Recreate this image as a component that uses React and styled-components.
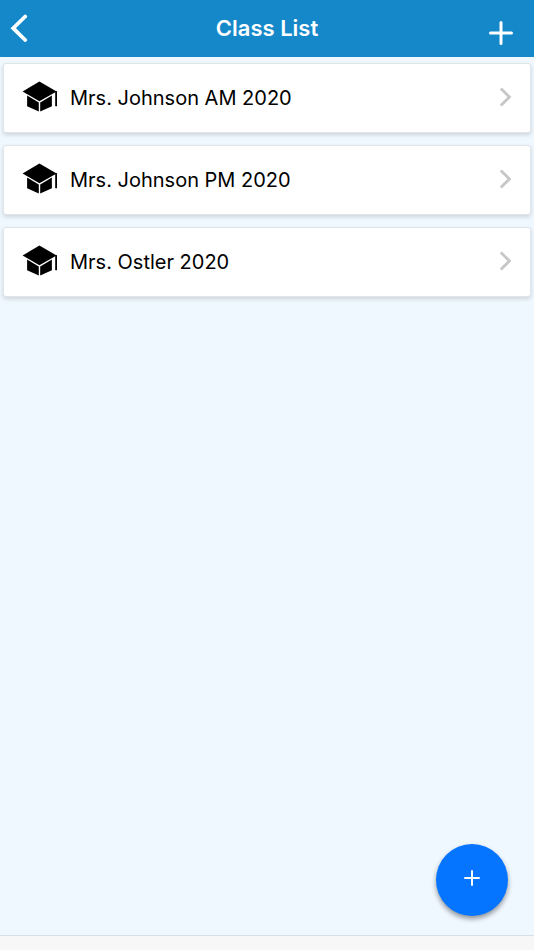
import React from 'react'
import styled, { createGlobalStyle } from 'styled-components'

const GlobalStyle = createGlobalStyle`
  * {
    box-sizing: border-box;
  }
  body {
    margin: 0;
    background: #eff7ff;
    font-family: Inter, "Liberation Sans", sans-serif;
    color: #000;
  }
  button {
    border: 0;
    padding: 0;
    background: none;
    font: inherit;
    cursor: pointer;
  }
  svg {
    display: block;
  }
`

const Page = styled.div`
  min-height: 100vh;
  display: flex;
  flex-direction: column;
`

const Header = styled.header`
  display: grid;
  grid-template-columns: 64px 1fr 64px;
  align-items: center;
  height: 57px;
  padding-bottom: 1px;
  background: #1588ca;
  color: #fff;
`

const Title = styled.h1`
  margin: 0;
  font-size: 22px;
  line-height: 28px;
  font-weight: 600;
  text-align: center;
`

const HeaderButton = styled.button`
  display: flex;
  align-items: center;
  height: 100%;
  color: #fff;
  justify-content: ${props => props.$end ? 'flex-end' : 'flex-start'};
  padding: ${props => props.$end ? '10px 21px 0 0' : '0 0 0 10px'};
`

const List = styled.ul`
  flex: 1;
  display: flex;
  flex-direction: column;
  gap: 12px;
  margin: 0;
  padding: 6px 3px;
  list-style: none;
`

const ClassRow = styled.a`
  display: flex;
  align-items: center;
  gap: 12px;
  height: 70px;
  padding: 0 18px 2px;
  background: #fff;
  border: 1px solid #e0e5ea;
  border-radius: 3px;
  box-shadow: 0 2px 4px rgba(0, 0, 0, 0.14);
  color: #000;
  text-decoration: none;
`

const ClassName = styled.span`
  flex: 1;
  padding-top: 1px;
  font-size: 20px;
  line-height: 28px;
`

const AddButton = styled.button`
  position: fixed;
  right: 26px;
  bottom: 34px;
  display: flex;
  align-items: center;
  justify-content: center;
  width: 72px;
  height: 72px;
  && {
    padding-bottom: 4px;
    background: #0574ff;
  }
  border-radius: 50%;
  color: #fff;
  box-shadow: 0 3px 5px rgba(0, 0, 0, 0.4);
`

const Footer = styled.footer`
  height: 15px;
  background: #f7f7f7;
  border-top: 1px solid #d8e0e6;
`

const BackIcon = () => (
  <svg width="18" height="28" viewBox="0 0 18 28" fill="none" stroke="currentColor" strokeWidth="3.8" strokeLinecap="round" aria-hidden="true">
    <path d="M15.2 2.5 3.2 14.2 15.2 26" />
  </svg>
)

const PlusIcon = ({ size, stroke }) => (
  <svg width={size} height={size} viewBox={`0 0 ${size} ${size}`} stroke="currentColor" strokeWidth={stroke} strokeLinecap="round" aria-hidden="true">
    <path d={`M${size / 2} ${stroke / 2}V${size - stroke / 2}M${stroke / 2} ${size / 2}H${size - stroke / 2}`} />
  </svg>
)

const SchoolIcon = () => (
  <svg width="36" height="34" viewBox="0 0 36 34" aria-hidden="true">
    <path d="M17.4 1.6 34.6 11.4 17.4 21.2.6 11.4Z" />
    <path d="M5.1 15.4 16.8 22.5V31.6L5.1 26.2Z" />
    <path d="M29.9 15.4 18.2 22.5V31.6L29.9 26.2Z" />
    <path d="M33.2 11.6 35 11V26.3H33.2Z" />
  </svg>
)

const ChevronIcon = () => (
  <svg width="13" height="22" viewBox="0 0 13 22" fill="none" stroke="#c7c7c7" strokeWidth="2.8" aria-hidden="true">
    <path d="M1.8 2.4 10.4 11 1.8 19.6" />
  </svg>
)

const classes = [
  { id: 1, name: 'Mrs. Johnson AM 2020' },
  { id: 2, name: 'Mrs. Johnson PM 2020' },
  { id: 3, name: 'Mrs. Ostler 2020' },
]

export const ClassList = (props) => {
  const rows = props.classes.map(item => (
    <li key={item.id}>
      <ClassRow href={`#class-${item.id}`}>
        <SchoolIcon />
        <ClassName>{item.name}</ClassName>
        <ChevronIcon />
      </ClassRow>
    </li>
  ))
  return <List>{rows}</List>
}

export default function App() {
  return (
    <Page>
      <GlobalStyle />
      <Header>
        <HeaderButton type="button" aria-label="Back"><BackIcon /></HeaderButton>
        <Title>Class List</Title>
        <HeaderButton type="button" aria-label="Add class" $end><PlusIcon size={24} stroke={3} /></HeaderButton>
      </Header>
      <ClassList classes={classes} />
      <AddButton type="button" aria-label="New class"><PlusIcon size={16} stroke={2} /></AddButton>
      <Footer />
    </Page>
  )
}
